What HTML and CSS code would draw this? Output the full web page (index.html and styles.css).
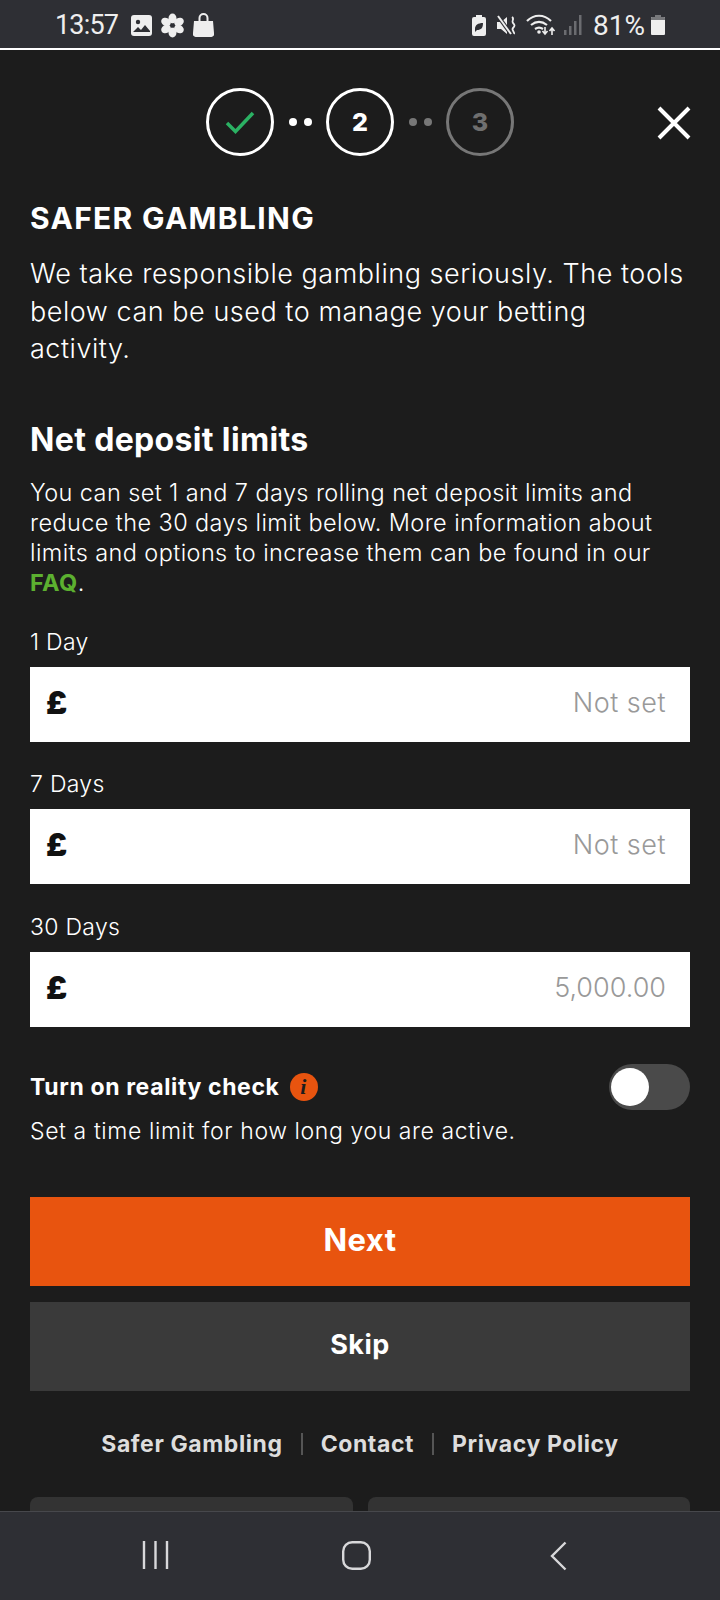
FILE: index.html
```html
<!DOCTYPE html>
<html lang="en">
<head>
    <meta charset="UTF-8">
    <meta name="viewport" content="width=device-width, initial-scale=1.0">
    <title>Safer Gambling</title>
    <link rel="stylesheet" href="styles.css">
</head>
<body>
    <div class="screen">
        <div class="status-bar">
            <div class="status-left">
                <span class="status-time">13:57</span>
                <svg class="status-icon" width="21" height="21" viewBox="0 0 21 21"><rect width="21" height="21" rx="3" fill="#eee"/><circle cx="7" cy="7" r="2.2" fill="#2e2f34"/><path d="M2 17l5-5 3 3 4-5 5 6v1H2z" fill="#2e2f34"/></svg>
                <svg class="status-icon" width="25" height="25" viewBox="0 0 25 25"><g fill="#eee"><ellipse cx="12.5" cy="5.500" rx="4" ry="5"/><ellipse cx="12.5" cy="19.500" rx="4" ry="5"/><ellipse cx="6" cy="9" rx="5" ry="4" transform="rotate(30 6 9)"/><ellipse cx="19" cy="9" rx="5" ry="4" transform="rotate(-30 19 9)"/><ellipse cx="6" cy="16" rx="5" ry="4" transform="rotate(-30 6 16)"/><ellipse cx="19" cy="16" rx="5" ry="4" transform="rotate(30 19 16)"/></g><circle cx="12.5" cy="12.5" r="2" fill="#2e2f34"/></svg>
                <svg class="status-icon" width="21" height="24" viewBox="0 0 21 24"><path d="M1 8h19l1 12a3 3 0 0 1-3 4H3a3 3 0 0 1-3-4z" fill="#eee"/><path d="M6.500 10V5a4 4 0 0 1 8 0v5" fill="none" stroke="#eee" stroke-width="2"/></svg>
            </div>
            <div class="status-right">
                <svg class="status-icon status-leaf" width="14" height="21" viewBox="0 0 14 21"><path d="M4 0h6v2h2a2 2 0 0 1 2 2v15a2 2 0 0 1-2 2H2a2 2 0 0 1-2-2V4a2 2 0 0 1 2-2h2z" fill="#eee"/><path d="M3 14c0-4 3-6 8-6 0 5-2 7-6 7l-2 2z" fill="#2e2f34"/></svg>
                <svg class="status-icon" width="21" height="21" viewBox="0 0 21 21"><path d="M0 7h4l6-5v17l-6-5H0z" fill="#eee"/><path d="M1 1l13 18" stroke="#2e2f34" stroke-width="4"/><path d="M1 1l13 18" stroke="#eee" stroke-width="2"/><path d="M15 2c3 2-1 4 1 6s2 3 0 5 2 4 1 6" fill="none" stroke="#eee" stroke-width="1.800"/></svg>
                <svg class="status-icon" width="30" height="22" viewBox="0 0 30 22"><g fill="none" stroke="#eee" stroke-width="2.200"><path d="M1 7c7-7 17-7 24 0"/><path d="M5 11c5-4 11-4 16 0"/><path d="M9 15c3-2 5-2 8 0"/></g><circle cx="13" cy="18" r="1.800" fill="#eee"/><path d="M19 13v7m-2.500-3l2.500 3 2.500-3M26 21v-7m-2.500 3l2.500-3 2.500 3" fill="none" stroke="#eee" stroke-width="1.600"/></svg>
                <svg class="status-icon" width="19" height="20" viewBox="0 0 19 20"><g fill="#6b6c70"><rect x="0" y="15" width="2.500" height="5"/><rect x="5" y="11" width="2.500" height="9"/><rect x="10" y="6" width="2.500" height="14"/><rect x="15" y="0" width="2.500" height="20"/></g></svg>
                <span class="status-battery">81%</span>
                <svg class="status-icon" width="14" height="20" viewBox="0 0 14 20"><path d="M4 0h6v2h3a1 1 0 0 1 1 1v16a1 1 0 0 1-1 1H1a1 1 0 0 1-1-1V3a1 1 0 0 1 1-1h3z" fill="#eee"/><path d="M4 0h6v2h3a1 1 0 0 1 1 1v2H0V3a1 1 0 0 1 1-1h3z" fill="#77787b"/></svg>
            </div>
        </div>

        <div class="content">
            <div class="steps">
                <div class="step">
                    <svg width="30" height="24" viewBox="0 0 30 24"><path d="M2 13l8.500 8.500L28 3" fill="none" stroke="#2bb163" stroke-width="3.500"/></svg>
                </div>
                <div class="step-dots"><span></span><span></span></div>
                <div class="step">2</div>
                <div class="step-dots step-dots-off"><span></span><span></span></div>
                <div class="step step-off">3</div>
            </div>
            <svg class="close-btn" width="34" height="34" viewBox="0 0 34 34"><path d="M2 2l30 30M32 2L2 32" stroke="#fff" stroke-width="4"/></svg>

            <h1 class="page-title">SAFER GAMBLING</h1>
            <p class="intro">We take responsible gambling seriously. The tools below can be used to manage your betting activity.</p>

            <h2 class="section-title">Net deposit limits</h2>
            <p class="section-text">You can set 1 and 7 days rolling net deposit limits and reduce the 30 days limit below. More information about limits and options to increase them can be found in our <a class="faq-link">FAQ</a>.</p>

            <div class="field">
                <div class="field-label">1 Day</div>
                <div class="field-input"><span class="pound">£</span><span class="placeholder">Not set</span></div>
            </div>
            <div class="field">
                <div class="field-label">7 Days</div>
                <div class="field-input"><span class="pound">£</span><span class="placeholder">Not set</span></div>
            </div>
            <div class="field">
                <div class="field-label">30 Days</div>
                <div class="field-input"><span class="pound">£</span><span class="placeholder placeholder-amount">5,000.00</span></div>
            </div>

            <div class="reality-row">
                <div class="reality-label">Turn on reality check <span class="info-badge">i</span></div>
                <div class="toggle"><div class="toggle-knob"></div></div>
            </div>
            <p class="reality-text">Set a time limit for how long you are active.</p>

            <div class="btn btn-next">Next</div>
            <div class="btn btn-skip">Skip</div>

            <div class="footer-links">
                <a>Safer Gambling</a><span class="sep"></span><a>Contact</a><span class="sep"></span><a>Privacy Policy</a>
            </div>

            <div class="cards">
                <div class="card"></div>
                <div class="card"></div>
            </div>
        </div>

        <div class="nav-bar">
            <svg width="27" height="28" viewBox="0 0 27 28"><path d="M2 0v28M13.500 0v28M25 0v28" stroke="#d8d8da" stroke-width="2.400"/></svg>
            <svg class="nav-home" width="29" height="29" viewBox="0 0 29 29"><rect x="1.200" y="1.200" width="26.600" height="26.600" rx="9" fill="none" stroke="#d8d8da" stroke-width="2.400"/></svg>
            <svg class="nav-back" width="17" height="30" viewBox="0 0 17 30"><path d="M15.500 1.500L2 15l13.500 13.500" fill="none" stroke="#d8d8da" stroke-width="2.400"/></svg>
        </div>
    </div>
</body>
</html>
```

FILE: styles.css
```css
* {
    box-sizing: border-box;
}

body {
    margin: 0;
    font-family: Inter, "Liberation Sans", sans-serif;
    background: #1c1c1c;
    color: #fff;
}

p, h1, h2 {
    margin: 0;
}

.screen {
    width: 720px;
    height: 1600px;
    display: flex;
    flex-direction: column;
    overflow: hidden;
}

/* status bar */
.status-bar {
    height: 50px;
    flex: none;
    display: flex;
    justify-content: space-between;
    align-items: center;
    padding: 2px 55px 0;
    background: #2e2f34;
    border-bottom: 2px solid #fff;
    color: #eee;
    font-family: Roboto, sans-serif;
    font-size: 28px;
}

.status-left,
.status-right {
    display: flex;
    align-items: center;
    gap: 8px;
}

.status-time {
    margin-right: 5px;
    font-size: 27px;
    letter-spacing: -0.8px;
}

.status-leaf {
    margin-right: 3px;
}

.status-battery {
    margin: 0 -2px 0 2px;
}

.status-icon {
    display: block;
}

/* main */
.content {
    position: relative;
    flex: 1;
    min-height: 0;
    overflow: hidden;
    padding: 38px 30px 0;
}

.steps {
    display: flex;
    justify-content: center;
    align-items: center;
    gap: 14.500px;
}

.step {
    width: 68px;
    height: 68px;
    display: flex;
    align-items: center;
    justify-content: center;
    border: 3px solid #fff;
    border-radius: 50%;
    font-size: 25px;
    font-weight: 800;
}

.step-off {
    border-color: #777;
    color: #6f6f6f;
}

.step-dots {
    display: flex;
    gap: 7px;
}

.step-dots span {
    width: 8px;
    height: 8px;
    border-radius: 50%;
    background: #fff;
}

.step-dots-off span {
    background: #777;
}

.close-btn {
    position: absolute;
    top: 56px;
    right: 29px;
}

.page-title {
    margin-top: 44px;
    font-size: 30px;
    line-height: 36px;
    font-weight: 700;
    letter-spacing: 1.3px;
}

.intro {
    margin-top: 19px;
    font-size: 27px;
    line-height: 37.500px;
    font-weight: 300;
    letter-spacing: 0.53px;
}

.section-title {
    margin-top: 53px;
    font-size: 32px;
    line-height: 38px;
    font-weight: 700;
    letter-spacing: 0.35px;
}

.section-text {
    margin-top: 19px;
    font-size: 23.500px;
    line-height: 30px;
    font-weight: 300;
    letter-spacing: 0.4px;
}

.faq-link {
    color: #5cb030;
    font-weight: 700;
}

.field {
    margin-top: 29px;
}

.field + .field {
    margin-top: 27.500px;
}

.field-label {
    font-size: 23px;
    line-height: 30px;
    font-weight: 300;
    letter-spacing: 0.3px;
}

.field-input {
    height: 75px;
    margin-top: 10px;
    padding: 0 24px 4px 16px;
    display: flex;
    justify-content: space-between;
    align-items: center;
    background: #fff;
}

.pound {
    color: #111;
    font-size: 32px;
    font-weight: 900;
}

.placeholder {
    color: #999;
    font-size: 27px;
    font-weight: 300;
    letter-spacing: 0.5px;
}

.placeholder-amount {
    letter-spacing: 0;
}

.reality-row {
    margin-top: 37px;
    display: flex;
    justify-content: space-between;
    align-items: center;
}

.reality-label {
    display: flex;
    align-items: center;
    gap: 10px;
    font-size: 23px;
    font-weight: 700;
    letter-spacing: 0.63px;
}

.info-badge {
    width: 28px;
    height: 28px;
    display: flex;
    align-items: center;
    justify-content: center;
    border-radius: 50%;
    background: #e8540f;
    color: #1c1c1c;
    font-family: "Liberation Serif", serif;
    font-style: italic;
    font-size: 22px;
    font-weight: 700;
}

.toggle {
    width: 81px;
    height: 46px;
    padding: 4px 2px;
    border-radius: 23px;
    background: #4a4a4a;
}

.toggle-knob {
    width: 38px;
    height: 38px;
    border-radius: 50%;
    background: #fff;
}

.reality-text {
    margin-top: 5px;
    font-size: 23px;
    line-height: 32px;
    font-weight: 300;
    letter-spacing: 0.6px;
}

.btn {
    height: 89px;
    padding-bottom: 3px;
    display: flex;
    align-items: center;
    justify-content: center;
    font-weight: 700;
}

.btn-next {
    margin-top: 50px;
    background: #e8540f;
    font-size: 31px;
    letter-spacing: 0.5px;
}

.btn-skip {
    margin-top: 16px;
    background: #3a3a3a;
    font-size: 27px;
    letter-spacing: 0.5px;
}

.footer-links {
    margin-top: 37px;
    display: flex;
    justify-content: center;
    align-items: center;
    gap: 18px;
    color: #ddd;
    font-size: 23px;
    font-weight: 700;
    line-height: 32px;
    letter-spacing: 0.6px;
}

.sep {
    width: 2px;
    height: 22px;
    background: #555;
}

.cards {
    margin-top: 37px;
    display: flex;
    gap: 15px;
}

.card {
    flex: 1;
    height: 60px;
    border-radius: 8px 8px 0 0;
    background: #333;
}

/* android nav */
.nav-bar {
    height: 89px;
    flex: none;
    display: flex;
    align-items: flex-start;
    padding: 29px 0 0 142px;
    background: #2e2f34;
    border-top: 1px solid #47484c;
}

.nav-home {
    margin-left: 173px;
}

.nav-back {
    margin-left: 179px;
}
```
